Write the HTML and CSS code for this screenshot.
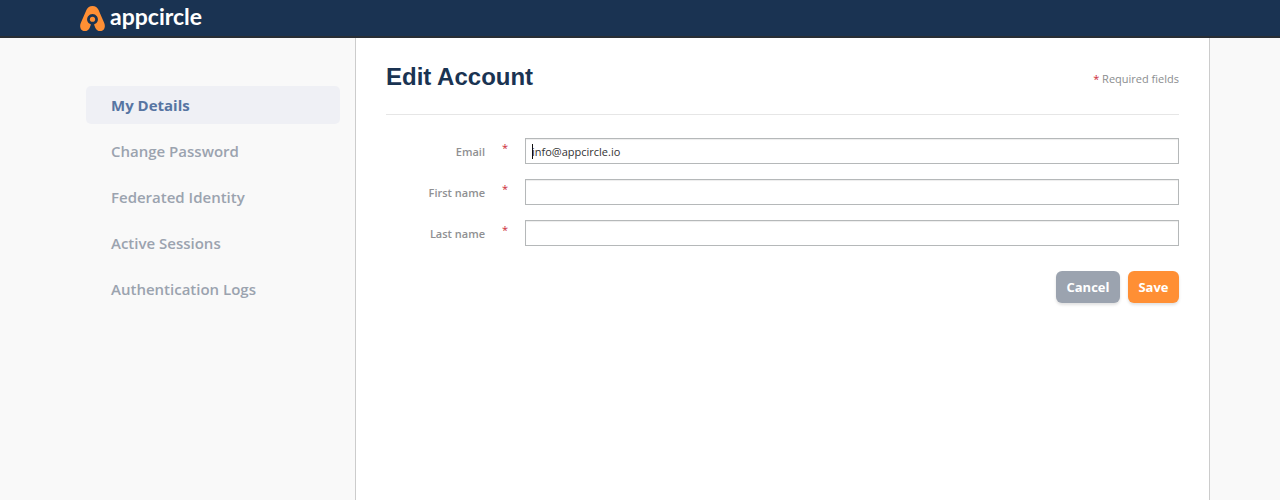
FILE: index.html
```
<!DOCTYPE html>
<html lang="en">
<head>
  <meta charset="utf-8">
  <meta name="viewport" content="width=device-width, initial-scale=1">
  <title>Edit Account</title>
  <link rel="stylesheet" href="styles.css">
</head>
<body class="page">
  <header class="navbar">
    <div class="container">
      <a class="brand" href="#">
        <svg class="brand-icon" viewBox="0 0 26 26" aria-hidden="true">
          <path fill="#ff8f34" fill-rule="evenodd" d="M13 0C10 0 8 1.400 6.800 4L.8 17.600C-1 22 1.200 26 5 26C7.400 26 9 25 10 22.800L11.400 19.300A5.600 5.600 0 1 1 14.600 19.300L16 22.800C17 25 18.600 26 21 26C24.800 26 27 22 25.200 17.600L19.200 4C18 1.400 16 0 13 0Z"/>
          <circle cx="13" cy="13.800" r="2.700" fill="#ff8f34"/>
        </svg>
        <span class="brand-name">appcircle</span>
      </a>
    </div>
  </header>
  <div class="container layout">
    <nav class="sidebar">
      <ul class="menu">
        <li><a class="menu-link active" href="#">My Details</a></li>
        <li><a class="menu-link" href="#">Change Password</a></li>
        <li><a class="menu-link" href="#">Federated Identity</a></li>
        <li><a class="menu-link" href="#">Active Sessions</a></li>
        <li><a class="menu-link" href="#">Authentication Logs</a></li>
      </ul>
    </nav>
    <main class="content">
      <div class="heading">
        <h1 class="title">Edit Account</h1>
        <span class="subtitle"><span class="required">*</span> Required fields</span>
      </div>
      <form class="form">
        <div class="field">
          <label class="label" for="email">Email</label>
          <span class="required mark">*</span>
          <div class="control">
            <input class="input" id="email" type="text" value="info@appcircle.io">
            <span class="caret"></span>
          </div>
        </div>
        <div class="field">
          <label class="label" for="first-name">First name</label>
          <span class="required mark">*</span>
          <input class="input" id="first-name" type="text">
        </div>
        <div class="field">
          <label class="label" for="last-name">Last name</label>
          <span class="required mark">*</span>
          <input class="input" id="last-name" type="text">
        </div>
        <div class="actions">
          <button class="button cancel" type="button">Cancel</button>
          <button class="button save" type="submit">Save</button>
        </div>
      </form>
    </main>
  </div>
</body>
</html>
```
FILE: styles.css
```
* {
  box-sizing: border-box;
}

.page {
  display: flex;
  flex-direction: column;
  min-height: 100vh;
  margin: 0;
  background: #f9f9f9;
  color: #333;
  font: 11px/18px "Open Sans", "Noto Sans", sans-serif;
}

.container {
  width: 100%;
  max-width: 1140px;
  margin: 0 auto;
}

.navbar {
  height: 38px;
  background: #1a3352;
  border-bottom: 2px solid #292e34;
}

.brand {
  display: inline-flex;
  align-items: flex-start;
  gap: 5px;
  height: 36px;
  padding-left: 10px;
  color: #fff;
  text-decoration: none;
}

.brand-icon {
  width: 25px;
  height: 25px;
  margin-top: 6px;
}

.brand-name {
  font: 700 23px/32px Lato, sans-serif;
}

.layout {
  display: flex;
  flex: 1;
}

.sidebar {
  flex: 0 0 25%;
  padding: 48px 15px 0 16px;
}

.menu {
  display: grid;
  gap: 8px;
  margin: 0;
  padding: 0;
  list-style: none;
}

.menu-link {
  display: block;
  padding: 8px 25px;
  border-radius: 5px;
  color: #9ba3af;
  font-size: 15px;
  font-weight: 600;
  line-height: 22px;
  text-decoration: none;
}

.menu-link.active {
  background: #eff0f5;
  color: #5775a2;
  font-weight: 700;
}

.content {
  flex: 1;
  padding: 24px 30px;
  background: #fff;
  border: solid #ccc;
  border-width: 0 1px;
}

.heading {
  display: flex;
  align-items: center;
  justify-content: space-between;
  padding-bottom: 22px;
  border-bottom: 1px solid #e6e6e6;
}

.title {
  margin: 0;
  color: #1a3352;
  font: 700 24px/30px "Liberation Sans", Arial, sans-serif;
}

.subtitle {
  padding-top: 4px;
  color: #8b8d8f;
}

.required {
  color: #cc2936;
}

.form {
  display: grid;
  gap: 15px;
  padding-top: 23px;
}

.field {
  display: grid;
  grid-template-columns: 99px 24px 1fr;
  column-gap: 8px;
  align-items: center;
}

.label {
  padding-top: 2px;
  color: #8f9092;
  font-weight: 600;
  text-align: right;
}

.mark {
  padding: 0 0 6px 9px;
}

.control {
  position: relative;
  display: flex;
}

.caret {
  position: absolute;
  top: 6px;
  left: 7px;
  width: 1px;
  height: 15px;
  background: #111;
}

.input {
  width: 100%;
  height: 26px;
  padding: 2px 6px;
  border: 1px solid #b5b8b9;
  border-radius: 0;
  outline: none;
  background: #fff;
  box-shadow: inset 0 1px 1px rgba(3, 3, 3, 0.075);
  color: #333;
  font: inherit;
}

.actions {
  display: flex;
  justify-content: flex-end;
  gap: 8px;
  padding-top: 10px;
}

.button {
  height: 32px;
  padding: 0 10px;
  border: 0;
  border-radius: 6px;
  box-shadow: 0 2px 3px rgba(3, 3, 3, 0.12);
  color: #fff;
  font: 700 13px/20px "Open Sans", "Noto Sans", sans-serif;
}

.cancel {
  min-width: 64px;
  background: #9ba3af;
}

.save {
  min-width: 51px;
  background: #ff8f34;
}
```
